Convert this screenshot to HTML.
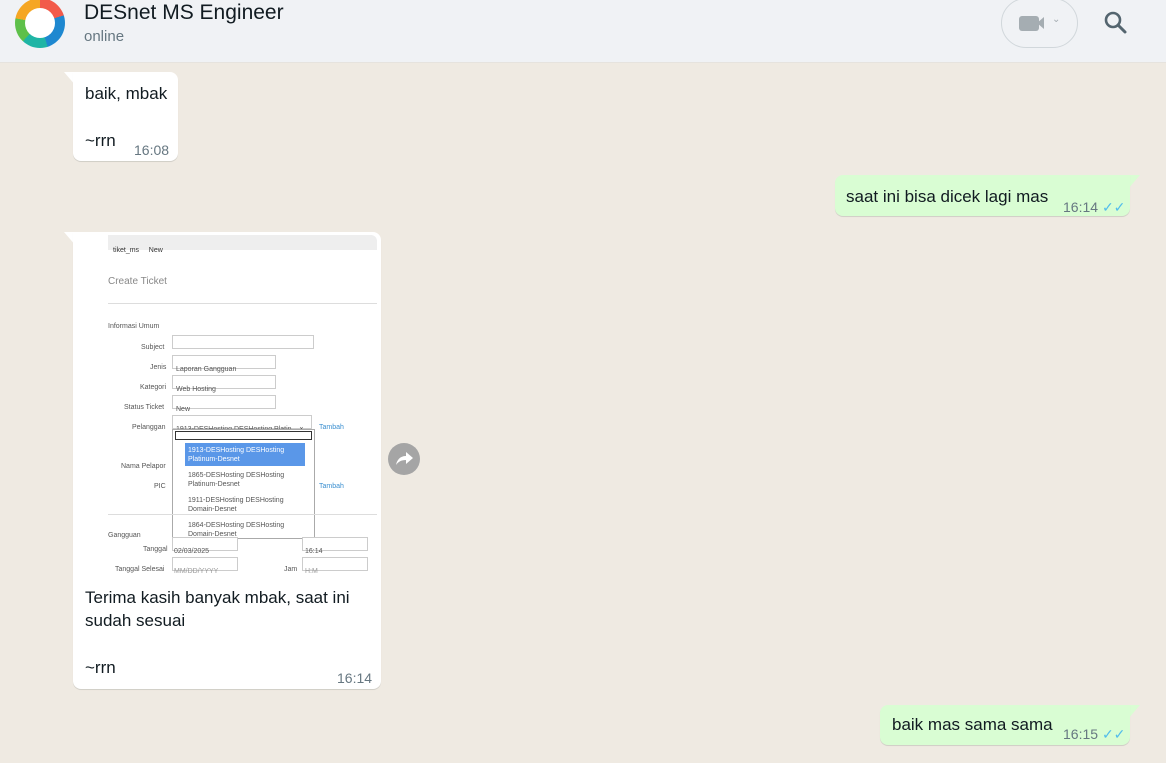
<!DOCTYPE html>
<html><head><meta charset="utf-8"><style>
*{margin:0;padding:0;box-sizing:border-box}
body{width:1166px;height:763px;overflow:hidden;background:#efeae2;font-family:"Liberation Sans",sans-serif;position:relative;color:#111b21}
.hdr{position:absolute;left:0;top:0;width:1166px;height:63px;background:#f0f2f5;border-bottom:1px solid #e6e3de}
.av{position:absolute;left:15px;top:-2px;width:50px;height:50px;border-radius:50%;background:conic-gradient(#f25a4a 0 20%,#1e88d0 20% 45%,#1fb5a5 45% 62%,#5ec04a 62% 78%,#f5a623 78% 100%)}
.av:after{content:"";position:absolute;left:10px;top:10px;width:30px;height:30px;border-radius:50%;background:#fff}
.b{position:absolute;border-radius:8px;box-shadow:0 1px .5px rgba(11,20,26,.13);font-size:17px;line-height:23px}
.in{background:#fff}
.out{background:#d9fdd3}
.t{position:absolute;font-size:14px;color:#667781}
.f{font-size:7px;color:#555;position:absolute}
.inp{position:absolute;border:1px solid #ccc;background:#fff;height:14px}
</style></head><body>
<div class="hdr">
 <div class="av"></div>
 <div style="position:absolute;left:84px;top:1px;font-size:21px;color:#111b21">DESnet MS Engineer</div>
 <div style="position:absolute;left:84px;top:28px;font-size:15px;color:#667781">online</div>
 <div style="position:absolute;left:1001px;top:-2px;width:77px;height:50px;border:1px solid #d1d7db;border-radius:25px"></div>
 <div style="position:absolute;left:1019px;top:16px;width:20px;height:15px;background:#a5adb2;border-radius:3px"></div>
 <div style="position:absolute;left:1037px;top:17px;width:0;height:0;border-top:6px solid transparent;border-bottom:6px solid transparent;border-right:7px solid #a5adb2"></div>
 <div style="position:absolute;left:1052px;top:14px;font-size:10px;color:#a5adb2">&#8964;</div>
 <svg style="position:absolute;left:1103px;top:10px" width="26" height="26" viewBox="0 0 26 26"><circle cx="10" cy="10" r="7" fill="none" stroke="#54656f" stroke-width="2.6"/><path d="M15 15l7 7" stroke="#54656f" stroke-width="3" stroke-linecap="round"/></svg>
</div>

<svg style="position:absolute;left:64px;top:72px" width="12" height="14"><path d="M0 0H12V14Z" fill="#fff"/></svg>
<div class="b in" style="left:73px;top:72px;width:105px;height:89px;border-top-left-radius:0">
 <div style="position:absolute;left:12px;top:10px">baik, mbak</div>
 <div style="position:absolute;left:12px;top:57px">~rrn</div>
 <div class="t" style="left:61px;top:67px">16:08</div>
</div>

<svg style="position:absolute;left:1128px;top:175px" width="12" height="14"><path d="M0 0H12L0 14Z" fill="#d9fdd3"/></svg>
<div class="b out" style="left:835px;top:175px;width:295px;height:41px;border-top-right-radius:0">
 <div style="position:absolute;left:11px;top:10px">saat ini bisa dicek lagi mas</div>
 <div class="t" style="left:228px;top:21px">16:14 <span style="color:#53bdeb">✓✓</span></div>
</div>

<svg style="position:absolute;left:64px;top:232px" width="12" height="14"><path d="M0 0H12V14Z" fill="#fff"/></svg>
<div class="b in" style="left:73px;top:232px;width:308px;height:457px;border-top-left-radius:0">
 <div style="position:absolute;left:35px;top:3px;width:269px;height:344px;background:#fff;overflow:hidden">
  <div style="position:absolute;left:0;top:0;width:269px;height:15px;background:#eee;border-radius:0 6px 0 0"></div>
  <div class="f" style="left:5px;top:4px;color:#333">tiket_ms &nbsp;&nbsp;&nbsp; New</div>
  <div class="f" style="left:0;top:35px;font-size:10px;color:#888">Create Ticket</div>
  <div style="position:absolute;left:0;top:68px;width:269px;height:1px;background:#ddd"></div>
  <div class="f" style="left:0;top:80px">Informasi Umum</div>
  <div class="f" style="left:33px;top:101px">Subject</div><div class="inp" style="left:64px;top:100px;width:142px"></div>
  <div class="f" style="left:42px;top:121px">Jenis</div><div class="inp" style="left:64px;top:120px;width:104px"></div><div class="f" style="left:68px;top:123px">Laporan Gangguan</div>
  <div class="f" style="left:32px;top:141px">Kategori</div><div class="inp" style="left:64px;top:140px;width:104px"></div><div class="f" style="left:68px;top:143px">Web Hosting</div>
  <div class="f" style="left:16px;top:161px">Status Ticket</div><div class="inp" style="left:64px;top:160px;width:104px"></div><div class="f" style="left:68px;top:163px">New</div>
  <div class="f" style="left:24px;top:181px">Pelanggan</div><div class="inp" style="left:64px;top:180px;width:140px"></div><div class="f" style="left:68px;top:183px">1913-DESHosting DESHosting Platin... ×</div>
  <div class="f" style="left:211px;top:181px;color:#3a8fd0">Tambah</div>
  <div style="position:absolute;left:64px;top:194px;width:143px;height:110px;border:1px solid #aaa;background:#fff"></div>
  <div style="position:absolute;left:67px;top:196px;width:137px;height:9px;border:1px solid #333"></div>
  <div style="position:absolute;left:77px;top:208px;width:120px;height:23px;background:#5a97e8"></div>
  <div class="f" style="left:80px;top:211px;color:#fff;line-height:9px">1913-DESHosting DESHosting<br>Platinum-Desnet</div>
  <div class="f" style="left:80px;top:236px;line-height:9px">1865-DESHosting DESHosting<br>Platinum-Desnet</div>
  <div class="f" style="left:80px;top:261px;line-height:9px">1911-DESHosting DESHosting<br>Domain-Desnet</div>
  <div class="f" style="left:80px;top:286px;line-height:9px">1864-DESHosting DESHosting<br>Domain-Desnet</div>
  <div class="f" style="left:13px;top:220px">Nama Pelapor</div>
  <div class="f" style="left:46px;top:240px">PIC</div><div class="f" style="left:211px;top:240px;color:#3a8fd0">Tambah</div>
  <div style="position:absolute;left:0;top:279px;width:269px;height:1px;background:#ddd"></div>
  <div class="f" style="left:0;top:289px">Gangguan</div>
  <div class="f" style="left:35px;top:303px">Tanggal</div><div class="inp" style="left:64px;top:302px;width:66px"></div><div class="f" style="left:66px;top:305px">02/03/2025</div>
  <div class="inp" style="left:194px;top:302px;width:66px"></div><div class="f" style="left:197px;top:305px">16:14</div>
  <div class="f" style="left:7px;top:323px">Tanggal Selesai</div><div class="inp" style="left:64px;top:322px;width:66px"></div><div class="f" style="left:66px;top:325px;color:#999">MM/DD/YYYY</div>
  <div class="f" style="left:176px;top:323px">Jam</div><div class="inp" style="left:194px;top:322px;width:66px"></div><div class="f" style="left:197px;top:325px;color:#999">H:M</div>
 </div>
 <div style="position:absolute;left:12px;top:354px">Terima kasih banyak mbak, saat ini<br>sudah sesuai</div>
 <div style="position:absolute;left:12px;top:424px">~rrn</div>
 <div class="t" style="left:264px;top:435px">16:14</div>
</div>
<div style="position:absolute;left:388px;top:443px;width:32px;height:32px;border-radius:50%;background:#a5a5a5"></div>
<svg style="position:absolute;left:394px;top:450px" width="20" height="18" viewBox="0 0 20 18"><path d="M12 2l7 6-7 6v-4C7 10 4 12 2 15 3 10 6 6 12 6z" fill="#fff"/></svg>

<svg style="position:absolute;left:1128px;top:705px" width="12" height="14"><path d="M0 0H12L0 14Z" fill="#d9fdd3"/></svg>
<div class="b out" style="left:880px;top:705px;width:250px;height:40px;border-top-right-radius:0">
 <div style="position:absolute;left:12px;top:8px">baik mas sama sama</div>
 <div class="t" style="left:183px;top:18px">16:15 <span style="color:#53bdeb">✓✓</span></div>
</div>
</body></html>
